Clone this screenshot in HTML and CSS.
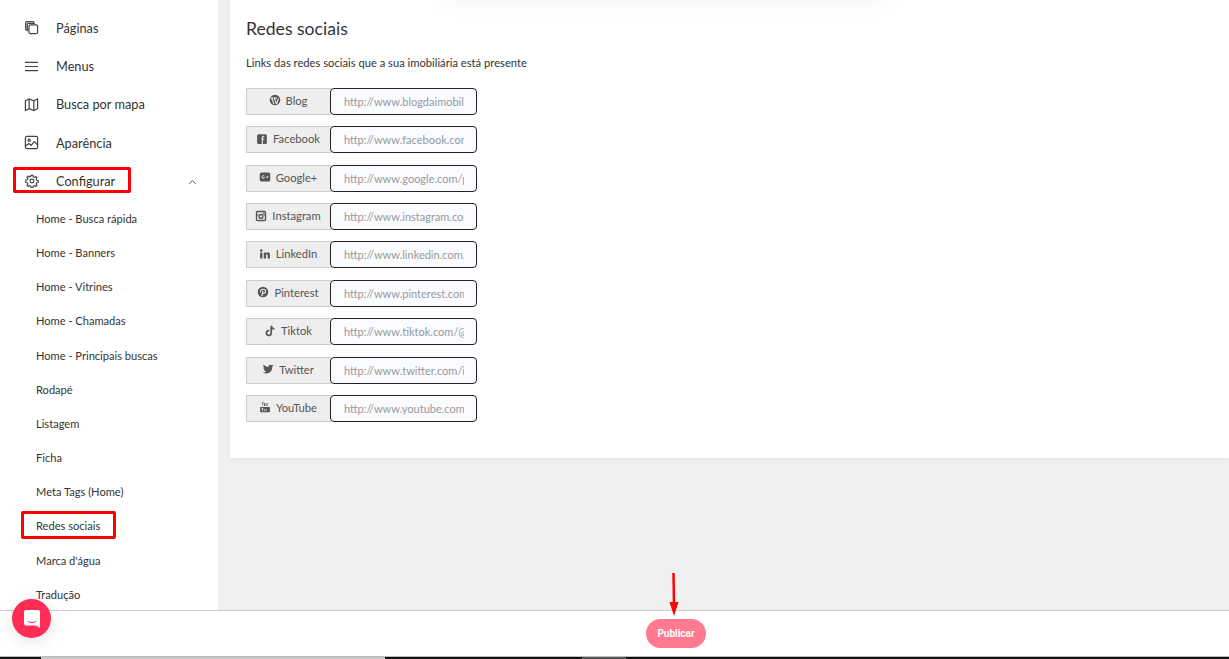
FILE: index.html
```html
<!DOCTYPE html>
<html lang="pt-BR">
<head>
  <meta charset="UTF-8" />
  <title>Redes sociais</title>
  <link rel="stylesheet" href="styles.css">
</head>
<body>
  <div class="app">
    <aside class="sidebar">
      <nav class="menu">
        <a class="menu-item">
          <svg class="menu-icon" viewBox="0 0 16 16"><path d="M4 10.500H2.800c-.6 0-1-.4-1-1V2.800c0-.6.4-1 1-1h6.700c.6 0 1 .4 1 1V4"/><path d="M3.500 12V4.500c0-.6.4-1 1-1h7"/><rect x="5.300" y="5.300" width="9.200" height="9.200" rx="1.500"/></svg>
          <span>Páginas</span>
        </a>
        <a class="menu-item">
          <svg class="menu-icon" viewBox="0 0 16 16"><path d="M1 3.500h14M1 8h14M1 12.500h14"/></svg>
          <span>Menus</span>
        </a>
        <a class="menu-item">
          <svg class="menu-icon" viewBox="0 0 16 16"><path d="M1.500 4l4-2 5 2 4-2v10.500l-4 2-5-2-4 2z"/><path d="M5.500 2v10.500M10.500 4v10.500"/></svg>
          <span>Busca por mapa</span>
        </a>
        <a class="menu-item">
          <svg class="menu-icon" viewBox="0 0 16 16"><rect x="1.500" y="1.500" width="13" height="13" rx="1.500"/><circle cx="5.500" cy="5.500" r="1.200"/><path d="M1.500 12l3.500-3 2.500 2 3.500-4 3.500 3.500"/></svg>
          <span>Aparência</span>
        </a>
        <a class="menu-item menu-open">
          <svg class="menu-icon icon-gear" viewBox="0 0 16 16"><circle cx="8" cy="8" r="2.200"/><path d="M6.900 1.500h2.200l.3 1.800 1.300.6 1.500-1 1.500 1.500-1 1.500.6 1.300 1.800.3v2.200l-1.800.3-.6 1.300 1 1.500-1.500 1.500-1.500-1-1.300.6-.3 1.800H6.900l-.3-1.800-1.300-.6-1.500 1-1.500-1.500 1-1.500-.6-1.300-1.800-.3V6.900l1.800-.3.6-1.300-1-1.500 1.500-1.500 1.500 1 1.300-.6z"/></svg>
          <span>Configurar</span>
          <svg class="chevron" viewBox="0 0 10 6"><path d="M1.500 5L5 1.500 8.500 5"/></svg>
          <i class="mark mark-config"></i>
        </a>
        <div class="submenu">
          <a>Home - Busca rápida</a>
          <a>Home - Banners</a>
          <a>Home - Vitrines</a>
          <a>Home - Chamadas</a>
          <a>Home - Principais buscas</a>
          <a>Rodapé</a>
          <a>Listagem</a>
          <a>Ficha</a>
          <a>Meta Tags (Home)</a>
          <a>Redes sociais<i class="mark mark-sub"></i></a>
          <a>Marca d'água</a>
          <a>Tradução</a>
        </div>
      </nav>
    </aside>

    <main class="content">
      <section class="card">
        <div class="top-shade"></div>
        <h2>Redes sociais</h2>
        <p class="lead">Links das redes sociais que a sua imobiliária está presente</p>

        <div class="field">
          <label><svg class="brand" viewBox="0 0 16 16"><circle cx="8" cy="8" r="7"/><path class="cut" d="M3.500 5.500l3 8M7 5.500l3 8M12.500 6l-2.200 7.500M6 5.500H2.500M10.500 5.500h-4"/></svg>Blog</label>
          <input type="text" placeholder="http://www.blogdaimobiliaria.com.br">
        </div>
        <div class="field">
          <label><svg class="brand" viewBox="0 0 16 16"><rect x="1.500" y="1.500" width="13" height="13" rx="2"/><path class="cut" d="M11 4.500H9.800c-.8 0-1.300.5-1.300 1.300V14.500M7 8h4"/></svg>Facebook</label>
          <input type="text" placeholder="http://www.facebook.com/imobiliaria">
        </div>
        <div class="field">
          <label><svg class="brand" viewBox="0 0 16 16"><rect x="1" y="2" width="14" height="12" rx="2.500"/><path class="cut thin" d="M7 6.300C6 5.500 3.800 6 3.800 8s2.400 2.300 3.200 1.400V8.200H5.500M9.500 8h3M11 6.500v3"/></svg>Google+</label>
          <input type="text" placeholder="http://www.google.com/plus">
        </div>
        <div class="field">
          <label><svg class="brand brand-line" viewBox="0 0 16 16"><rect x="2" y="2" width="12" height="12" rx="1.500"/><circle cx="8" cy="8.500" r="2.500"/><path d="M10.500 4.500h2"/><path d="M2 6.500h2.500M11.500 6.500H14"/></svg>Instagram</label>
          <input type="text" placeholder="http://www.instagram.com/imobiliaria">
        </div>
        <div class="field">
          <label><svg class="brand" viewBox="0 0 16 16"><rect x="1.500" y="6" width="3" height="8"/><circle cx="3" cy="3.300" r="1.700"/><path d="M6.300 6h2.800v1.200C9.700 6.300 10.600 5.800 11.700 5.800c2 0 2.900 1.300 2.900 3.400V14h-3V9.700c0-1-.4-1.500-1.100-1.500-.8 0-1.200.6-1.200 1.500V14h-3z"/></svg>LinkedIn</label>
          <input type="text" placeholder="http://www.linkedin.com/imobiliaria">
        </div>
        <div class="field">
          <label><svg class="brand" viewBox="0 0 16 16"><circle cx="8" cy="8" r="7"/><path class="cut" d="M6.500 13.500l1.500-7M5 8.500C3.800 6 6 4.300 8.300 4.300c2.200 0 3.400 1.500 3 3.500-.4 1.800-2.800 3-3.900 1.500"/></svg>Pinterest</label>
          <input type="text" placeholder="http://www.pinterest.com/imobiliaria">
        </div>
        <div class="field">
          <label><svg class="brand" viewBox="0 0 16 16"><path d="M8.500 1h2.300c.2 1.700 1.200 2.800 3 3v2.300c-1.200 0-2.200-.4-3-1v5.200c0 2.800-2.100 4.500-4.400 4.500-2.500 0-4.400-1.900-4.400-4.300 0-2.700 2.300-4.700 5-4.300v2.400c-1.300-.4-2.600.6-2.600 1.900 0 1.100.9 2 2 2 1.200 0 2.100-.9 2.100-2.200z"/></svg>Tiktok</label>
          <input type="text" placeholder="http://www.tiktok.com/@imobiliaria">
        </div>
        <div class="field">
          <label><svg class="brand" viewBox="0 0 16 16"><path d="M15.500 3.400c-.6.300-1.200.4-1.800.5.600-.4 1.100-1 1.400-1.700-.6.400-1.300.6-2 .8-1.800-1.900-5-.3-4.400 2.300C6 5.200 3.700 4 2.100 2.100 1.300 3.500 1.700 5.400 3.100 6.300c-.5 0-1-.2-1.400-.4 0 1.500 1.100 2.800 2.500 3.100-.5.100-.9.100-1.400 0 .4 1.300 1.600 2.200 3 2.200-1.300 1-3 1.500-4.600 1.300 5.800 3.600 13-.1 12.500-7.800.7-.5 1.300-1 1.800-1.300z"/></svg>Twitter</label>
          <input type="text" placeholder="http://www.twitter.com/imobiliaria">
        </div>
        <div class="field">
          <label><svg class="brand" viewBox="0 0 16 16"><path d="M1.500 8h13v6c0 .6-.4 1-1 1h-11c-.6 0-1-.4-1-1z"/><path class="cut thin" d="M4.500 10v3.500M7 10.500v3M9.500 10.500v3M3.500 10h2"/><path d="M4.200 1l.8 2 .8-2h.6L5.300 4v2.500h-.7V4L3.500 1zM7.500 2.500c.7 0 1 .4 1 1v2c0 .7-.4 1-1 1s-1-.3-1-1v-2c0-.6.4-1 1-1zM9.300 2.500h.7v3.300c.3-.3.600-.5.800-.5V2.500h.7v4h-.7V6c-.5.500-1.500.8-1.500-.2z"/></svg>YouTube</label>
          <input type="text" placeholder="http://www.youtube.com/imobiliaria">
        </div>
      </section>
      <div class="arrow">
        <svg viewBox="0 0 12 46"><path class="arrow-line" d="M5.500 1l.5 32"/><path class="arrow-head" d="M1.500 30h9L6 44z"/></svg>
      </div>
    </main>
  </div>

  <footer class="actions">
    <button class="publish" type="button">Publicar</button>
  </footer>

  <div class="taskbar"><i class="bar-a"></i><i class="bar-b"></i><i class="bar-c"></i><i class="bar-d"></i><i class="bar-e"></i></div>

  <button class="chat" type="button">
    <svg viewBox="0 0 16 18"><path d="M2 0h12a2 2 0 0 1 2 2v16l-4-2.500H2a2 2 0 0 1-2-2V2a2 2 0 0 1 2-2z"/><path class="smile" d="M4 11.500c2 1.200 6 1.200 8 0"/></svg>
  </button>
</body>
</html>
```

FILE: styles.css
```css
* {
  box-sizing: border-box;
}

body {
  margin: 0;
  height: 659px;
  overflow: hidden;
  position: relative;
  font-family: 'Lato', sans-serif;
  color: #333;
  background: #f0f0f0;
}

.app {
  display: flex;
  height: 610px;
}

/* sidebar */
.sidebar {
  width: 218px;
  height: 610px;
  background: #fff;
  overflow: hidden;
  flex-shrink: 0;
}

.menu {
  padding: 8.800px 0 0 24px;
}

.menu-item {
  position: relative;
  display: flex;
  align-items: center;
  height: 38.250px;
  font-size: 12.750px;
  color: #333;
}

.menu-icon {
  width: 15px;
  height: 15px;
  margin-right: 17px;
  flex-shrink: 0;
  fill: none;
  stroke: #444;
  stroke-width: 1.300;
}

.icon-gear {
  width: 14px;
  height: 14px;
  margin-left: 0.500px;
  margin-right: 17.500px;
}

.chevron {
  position: absolute;
  left: 164px;
  top: 17px;
  width: 9px;
  height: 6px;
  fill: none;
  stroke: #444;
  stroke-width: 1;
}

.mark {
  position: absolute;
  border: 3px solid #f00;
  border-radius: 2px;
}

.mark-config {
  left: -11px;
  top: 5px;
  width: 118px;
  height: 26px;
}

.mark-sub {
  left: -15px;
  top: 2px;
  width: 95px;
  height: 28px;
}

.submenu {
  padding: 1.300px 0 0 12px;
}

.submenu a {
  position: relative;
  display: flex;
  align-items: center;
  height: 34.180px;
  font-size: 11.100px;
  color: #333;
}

/* main column */
.content {
  flex: 1;
  position: relative;
  padding-left: 12px;
}

.card {
  position: relative;
  height: 458px;
  background: #fff;
  padding: 15.600px 16px 0;
  box-shadow: 0 2px 8px rgba(0, 0, 0, 0.05);
}

.top-shade {
  position: absolute;
  left: 215px;
  top: -30px;
  width: 440px;
  height: 30px;
  box-shadow: 0 0 24px rgba(0, 0, 0, 0.06);
}

.card h2 {
  margin: 0;
  font-size: 17.600px;
  font-weight: 400;
  line-height: 26px;
  color: #333;
}

.lead {
  margin: 14.400px 0 18px;
  font-size: 11.200px;
  line-height: 14px;
  color: #333;
}

.field {
  display: flex;
  width: 231px;
  height: 27px;
  margin-bottom: 11.375px;
}

.field label {
  width: 85px;
  display: flex;
  align-items: center;
  justify-content: center;
  padding: 0 2px 2px 0;
  background: #eee;
  border: 1px solid #ccc;
  border-right: 0;
  font-size: 11.200px;
  color: #555;
}

.field input {
  width: 147px;
  margin-left: -1px;
  padding: 0 12px 0 13px;
  background: #fafbff;
  border: 1px solid #222;
  border-radius: 4px;
  font-family: 'Lato', sans-serif;
  font-size: 11px;
  outline: none;
}

.field input::placeholder {
  color: #999;
  opacity: 1;
}

.brand {
  width: 12px;
  height: 12px;
  margin-right: 5px;
  fill: #555;
}

.brand .cut {
  fill: none;
  stroke: #eee;
  stroke-width: 1.500;
}

.brand .thin {
  stroke-width: 1;
}

.brand-line {
  fill: none;
  stroke: #555;
  stroke-width: 1.800;
}

.arrow {
  position: absolute;
  left: 450px;
  top: 572px;
  width: 12px;
  height: 46px;
  z-index: 3;
}

.arrow svg {
  display: block;
  width: 12px;
  height: 46px;
}

.arrow-line {
  fill: none;
  stroke: #f00;
  stroke-width: 2.500;
}

.arrow-head {
  fill: #f00;
}

/* bottom bar */
.actions {
  height: 46px;
  display: flex;
  justify-content: center;
  align-items: flex-start;
  padding-top: 8px;
  background: #fff;
  border-top: 1px solid #ccc;
}

.publish {
  width: 60px;
  height: 29px;
  margin-left: 123px;
  border: 0;
  border-radius: 15px;
  background: #ff7a90;
  color: #fff;
  font-family: 'Roboto', sans-serif;
  font-size: 10px;
  font-weight: 700;
}

.taskbar {
  display: flex;
  height: 3px;
  background: #bbb;
  padding-top: 1px;
}

.taskbar i {
  display: block;
  height: 2px;
}

.bar-a {
  width: 41px;
  background: #111;
}

.bar-b {
  width: 344px;
  background: #c8c8c8;
}

.bar-c {
  width: 197px;
  background: #111;
}

.bar-d {
  width: 44px;
  background: #555;
}

.bar-e {
  flex: 1;
  background: #111;
}

.chat {
  position: absolute;
  left: 12px;
  top: 599px;
  width: 39px;
  height: 39px;
  padding: 0;
  border: 0;
  border-radius: 50%;
  background: #ff2d55;
  display: flex;
  align-items: center;
  justify-content: center;
  box-shadow: 0 4px 16px rgba(0, 0, 0, 0.1);
}

.chat svg {
  width: 16px;
  height: 18px;
  fill: #fff;
}

.chat .smile {
  fill: none;
  stroke: #ff2d55;
  stroke-width: 1;
}
```
